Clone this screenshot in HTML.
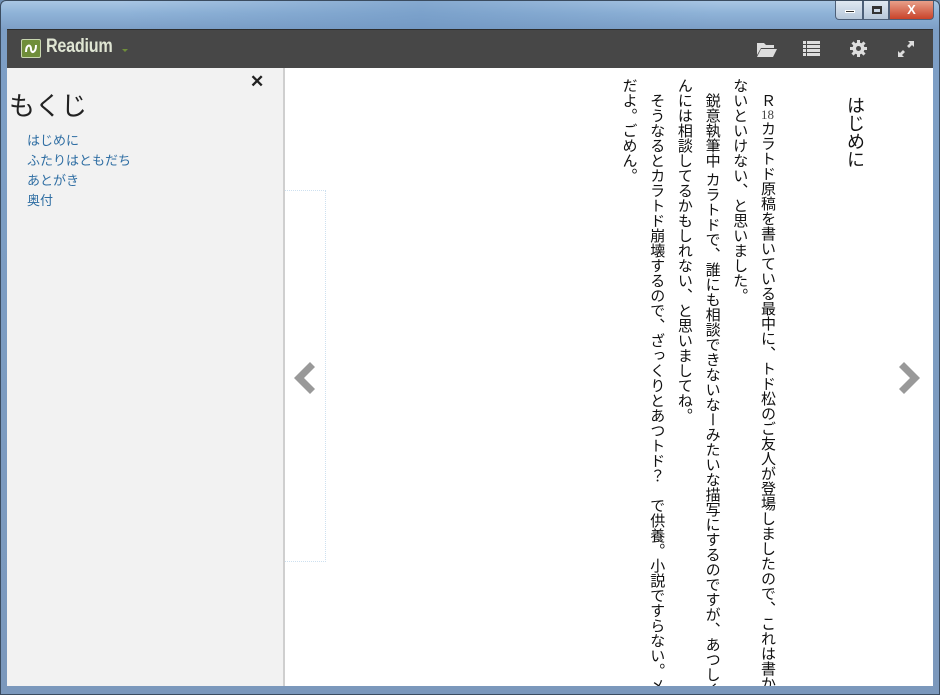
<!DOCTYPE html>
<html><head><meta charset="utf-8">
<style>
*{margin:0;padding:0;box-sizing:border-box}
body{width:940px;height:695px;overflow:hidden;position:relative;background:#6f8fb3;font-family:"Liberation Sans","Noto Sans CJK JP",sans-serif}
.frame{position:absolute;inset:0;background:linear-gradient(180deg,#a9c6e4 0,#8fb3d8 12px,#7d9fc6 28px,#7b98bc 100%);border-radius:6px 6px 0 0;border:1px solid #3b4c60}
.frame:before{content:"";position:absolute;left:120px;top:0;width:600px;height:28px;background:linear-gradient(90deg,rgba(255,255,255,0),rgba(110,150,195,.6),rgba(255,255,255,0))}
.ctrl{position:absolute;top:1px;height:19px;border:1px solid #4d5f78;border-top:none}
.tb{position:absolute;left:7px;top:29px;width:926px;height:39px;background:#474747;border-top:1px solid #2d2d2d}
.logo{position:absolute;left:14px;top:9px;width:20px;height:19px;background:#6f8e3a;border:1px solid #c8d6b0;border-radius:2px}
.rt{position:absolute;left:39px;top:6px;font:bold 19px "Liberation Sans",sans-serif;color:#dfe5d3;letter-spacing:-0.3px;transform:scaleX(.85);transform-origin:left}
.side{position:absolute;left:7px;top:68px;width:278px;height:618px;background:#f2f2f2;border-right:2px solid #cfcfcf}
.side h1{position:absolute;left:2px;top:18px;font:normal 26px "Liberation Sans","Noto Sans CJK JP",sans-serif;color:#222}
.side ul{position:absolute;left:20px;top:63px;list-style:none;font-size:13px;line-height:20px;color:#2f6ea3}
.x{position:absolute;left:243px;top:4px;font:bold 17px "Liberation Sans",sans-serif;color:#222}
.main{position:absolute;left:285px;top:68px;width:648px;height:618px;background:#fff}
.box{position:absolute;left:0;top:122px;width:41px;height:372px;border:1px dotted #cde0f0;border-left:none}
.title{position:absolute;left:845px;top:96px;writing-mode:vertical-rl;font-size:18px;line-height:20px;color:#111;font-family:"Liberation Serif","Noto Sans CJK JP",sans-serif}
.txt{position:absolute;right:159px;top:78px;height:608px;overflow:hidden;writing-mode:vertical-rl;font-size:15px;line-height:27.7px;color:#111;font-family:"Liberation Serif","Noto Sans CJK JP",sans-serif;white-space:nowrap}
.txt p{text-indent:1em}
.txt p.n{text-indent:0}
.tcy{text-combine-upright:all;font-size:13px;color:#444}
</style></head><body>
<div class="frame"></div>
<div class="ctrl" style="left:835px;width:28px;background:linear-gradient(#dfe8f2,#b7c7da);border-radius:0 0 0 4px"><div style="position:absolute;left:9px;top:9px;width:10px;height:3px;background:#333;border:1px solid #fff"></div></div>
<div class="ctrl" style="left:863px;width:26px;background:linear-gradient(#dfe8f2,#b7c7da)"><div style="position:absolute;left:8px;top:5px;width:10px;height:8px;border:2px solid #333;border-top-width:3px"></div></div>
<div class="ctrl" style="left:889px;width:45px;background:linear-gradient(#e8a08a,#c9432a);border-radius:0 0 4px 0;color:#fff;font:bold 13px 'Liberation Sans';text-align:center;line-height:17px">X</div>
<div class="tb">
<div class="logo"><svg width="18" height="17" viewBox="0 0 18 17"><path d="M4 12 C4 4 9 4 9 9 C9 14 14 13 14 5" stroke="#fff" stroke-width="2" fill="none"/></svg></div>
<div class="rt">Readium</div>
<div style="position:absolute;left:115px;top:19px;width:0;height:0;border:3px solid transparent;border-top-color:#6f8e3a"></div>
<svg style="position:absolute;left:750px;top:11px" width="20" height="16" viewBox="0 0 20 16"><path d="M0 2h7l2 2h8v3H4L0 14z" fill="#ddd"/><path d="M4 8h16l-4 8H0z" fill="#ddd"/></svg>
<svg style="position:absolute;left:796px;top:11px" width="17" height="15" viewBox="0 0 17 15"><g fill="#ddd"><rect x="0" y="0" width="3" height="3"/><rect x="4" y="0" width="13" height="3"/><rect x="0" y="4" width="3" height="3"/><rect x="4" y="4" width="13" height="3"/><rect x="0" y="8" width="3" height="3"/><rect x="4" y="8" width="13" height="3"/><rect x="0" y="12" width="3" height="3"/><rect x="4" y="12" width="13" height="3"/></g></svg>
<svg style="position:absolute;left:843px;top:10px" width="17" height="17" viewBox="0 0 17 17"><g fill="#ddd"><circle cx="8.5" cy="8.5" r="6"/><rect x="7" y="0" width="3" height="17"/><rect x="0" y="7" width="17" height="3"/><rect x="7" y="0" width="3" height="17" transform="rotate(45 8.5 8.5)"/><rect x="7" y="0" width="3" height="17" transform="rotate(-45 8.5 8.5)"/></g><circle cx="8.5" cy="8.5" r="2.5" fill="#474747"/></svg>
<svg style="position:absolute;left:890px;top:10px" width="18" height="18" viewBox="0 0 18 18"><g fill="#ddd"><path d="M11 1h6v6l-2-2-3 3-2-2 3-3z"/><path d="M1 17v-6l2 2 3-3 2 2-3 3 2 2z"/></g></svg>
</div>
<div class="side">
<div class="x">✕</div>
<h1>もくじ</h1>
<ul><li>はじめに</li><li>ふたりはともだち</li><li>あとがき</li><li>奥付</li></ul>
</div>
<div class="main">
<div class="box"></div>
<svg style="position:absolute;left:5px;top:292px" width="26" height="36" viewBox="0 0 26 36"><path d="M20 2l5 5-11 11 11 11-5 5L4 18z" fill="#999"/></svg>
<svg style="position:absolute;left:613px;top:292px" width="26" height="36" viewBox="0 0 26 36"><path d="M6 2L1 7l11 11L1 29l5 5 16-16z" fill="#999"/></svg>
</div>
<div class="title">はじめに</div>
<div class="txt">
<p>Ｒ<span class="tcy">18</span>カラトド原稿を書いている最中に、トド松のご友人が登場しましたので、これは書か</p>
<p class="n">ないといけない、と思いました。</p>
<p>鋭意執筆中 カラトドで、誰にも相談できないなーみたいな描写にするのですが、あつしく</p>
<p class="n">んには相談してるかもしれない、と思いましてね。</p>
<p>そうなるとカラトド崩壊するので、ざっくりとあつトド？　で供養。小説ですらない。メモ</p>
<p class="n">だよ。ごめん。</p>
</div>
</body></html>
